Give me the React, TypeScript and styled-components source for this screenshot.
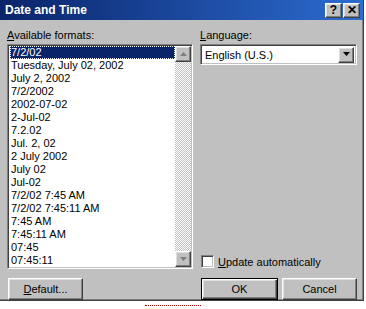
import React, { useState } from 'react';
import styled, { createGlobalStyle, css } from 'styled-components';

const FORMATS: string[] = [
  '7/2/02',
  'Tuesday, July 02, 2002',
  'July 2, 2002',
  '7/2/2002',
  '2002-07-02',
  '2-Jul-02',
  '7.2.02',
  'Jul. 2, 02',
  '2 July 2002',
  'July 02',
  'Jul-02',
  '7/2/02 7:45 AM',
  '7/2/02 7:45:11 AM',
  '7:45 AM',
  '7:45:11 AM',
  '07:45',
  '07:45:11',
];

const GlobalStyle = createGlobalStyle`
  body {
    margin: 0;
    background: #ffffff;
    font-family: "Liberation Sans", Arial, sans-serif;
    font-size: 11px;
  }
`;

const raised = css`
  border: 1px solid;
  border-color: #ffffff #404040 #404040 #ffffff;
  box-shadow: inset -1px -1px #808080, inset 1px 1px #dfdfdf;
  background: #c0c0c0;
`;

const sunken = css`
  border: 1px solid;
  border-color: #808080 #ffffff #ffffff #808080;
  box-shadow: inset 1px 1px #404040, inset -1px -1px #c0c0c0;
`;

const Dialog = styled.div`
  width: 363px;
  height: 300px;
  background: #c0c0c0;
  border-right: 1px solid #404040;
  border-bottom: 1px solid #404040;
  box-shadow: inset -1px -1px #808080;
  display: flex;
  flex-direction: column;
`;

const TitleBar = styled.div`
  height: 20px;
  background: linear-gradient(to right, #0a246a, #2c6cd0);
  display: flex;
  align-items: center;
  padding: 0 3px 0 5px;
  flex-shrink: 0;
`;

const Title = styled.span`
  flex: 1;
  color: #ffffff;
  font-weight: bold;
  font-size: 12px;
`;

const TitleButton = styled.button`
  ${raised};
  width: 17px;
  height: 15px;
  padding: 0;
  margin-left: 1px;
  font-family: "Liberation Sans", Arial, sans-serif;
  font-weight: bold;
  font-size: 12px;
  line-height: 11px;
  color: #000000;
  display: flex;
  align-items: center;
  justify-content: center;
`;

const Body = styled.div`
  flex: 1;
  display: grid;
  grid-template-columns: 186px 157px;
  grid-template-rows: 1fr auto;
  column-gap: 7px;
  padding: 9px 7px 0 7px;
`;

const Column = styled.div`
  display: flex;
  flex-direction: column;
`;

const Label = styled.div`
  line-height: 13px;
  height: 15px;
  color: #000000;
`;

const Key = styled.span`
  text-decoration: underline;
`;

const ListBox = styled.div`
  ${sunken};
  background: #ffffff;
  height: 225px;
  box-sizing: border-box;
  display: flex;
  padding: 1px;
`;

const Items = styled.div`
  flex: 1;
  overflow: hidden;
  padding-left: 1px;
`;

const Item = styled.div<{ $selected: boolean }>`
  height: 13px;
  line-height: 13px;
  padding-left: 1px;
  white-space: nowrap;
  box-sizing: border-box;
  color: ${({ $selected }) => ($selected ? '#ffffff' : '#000000')};
  background: ${({ $selected }) => ($selected ? '#0a246a' : 'transparent')};
  outline: ${({ $selected }) => ($selected ? '1px dotted #ffffff' : 'none')};
  outline-offset: -1px;
`;

const ScrollBar = styled.div`
  width: 16px;
  display: flex;
  flex-direction: column;
  justify-content: space-between;
  background: repeating-conic-gradient(#ffffff 0 25%, #c0c0c0 0 50%) 0 0 / 2px 2px;
`;

const ArrowButton = styled.div`
  ${raised};
  box-sizing: border-box;
  width: 16px;
  height: 16px;
  display: flex;
  align-items: center;
  justify-content: center;
`;

const Combo = styled.div`
  ${sunken};
  background: #ffffff;
  height: 21px;
  box-sizing: border-box;
  display: flex;
  align-items: center;
  padding: 2px;
`;

const ComboText = styled.span`
  flex: 1;
  padding-left: 2px;
`;

const Spacer = styled.div`
  flex: 1;
`;

const CheckRow = styled.label`
  display: flex;
  align-items: center;
  gap: 4px;
  height: 13px;
  margin-bottom: 1px;
  padding-left: 1px;
`;

const CheckBox = styled.span`
  ${sunken};
  width: 13px;
  height: 13px;
  box-sizing: border-box;
  background: #ffffff;
`;

const ButtonRow = styled.div<{ $align: string }>`
  display: flex;
  justify-content: ${({ $align }) => $align};
  gap: 4px;
  padding: 9px 0 0 0;
  height: 32px;
  box-sizing: border-box;
`;

const PushButton = styled.button<{ $default?: boolean }>`
  ${raised};
  width: 75px;
  height: 22px;
  padding: 0;
  font-family: "Liberation Sans", Arial, sans-serif;
  font-size: 11px;
  color: #000000;
  ${({ $default }) =>
    $default &&
    css`
      width: 77px;
      border: 1px solid #000000;
      box-shadow: inset 1px 1px #ffffff, inset -1px -1px #404040, inset -2px -2px #808080, inset 2px 2px #dfdfdf;
    `}
`;

const Squiggle = styled.div`
  width: 56px;
  margin: 4px 0 0 145px;
  border-top: 1px dotted #b00000;
`;

const UpArrow = () => (
  <svg width="7" height="5" viewBox="0 0 7 5">
    <path d="M3.5 0 L7 4 L0 4 Z" fill="#808080" />
  </svg>
);

const DownArrow = ({ color }: { color: string }) => (
  <svg width="7" height="5" viewBox="0 0 7 5">
    <path d="M0 0 L7 0 L3.5 4 Z" fill={color} />
  </svg>
);

const App = () => {
  const [selected, setSelected] = useState<number>(0);

  return (
    <>
      <GlobalStyle />
      <Dialog>
        <TitleBar>
          <Title>Date and Time</Title>
          <TitleButton>?</TitleButton>
          <TitleButton>✕</TitleButton>
        </TitleBar>
        <Body>
          <Column>
            <Label>
              <Key>A</Key>vailable formats:
            </Label>
            <ListBox>
              <Items>
                {FORMATS.map((f, i) => (
                  <Item key={f} $selected={selected === i} onClick={() => setSelected(i)}>
                    {f}
                  </Item>
                ))}
              </Items>
              <ScrollBar>
                <ArrowButton>
                  <UpArrow />
                </ArrowButton>
                <ArrowButton>
                  <DownArrow color="#808080" />
                </ArrowButton>
              </ScrollBar>
            </ListBox>
          </Column>
          <Column>
            <Label>
              <Key>L</Key>anguage:
            </Label>
            <Combo>
              <ComboText>English (U.S.)</ComboText>
              <ArrowButton>
                <DownArrow color="#000000" />
              </ArrowButton>
            </Combo>
            <Spacer />
            <CheckRow>
              <CheckBox />
              <span>
                <Key>U</Key>pdate automatically
              </span>
            </CheckRow>
          </Column>
          <ButtonRow $align="flex-start">
            <PushButton style={{ marginLeft: 1 }}>
              <Key>D</Key>efault...
            </PushButton>
          </ButtonRow>
          <ButtonRow $align="flex-end">
            <PushButton $default>OK</PushButton>
            <PushButton>Cancel</PushButton>
          </ButtonRow>
        </Body>
      </Dialog>
      <Squiggle />
    </>
  );
};

export default App;
